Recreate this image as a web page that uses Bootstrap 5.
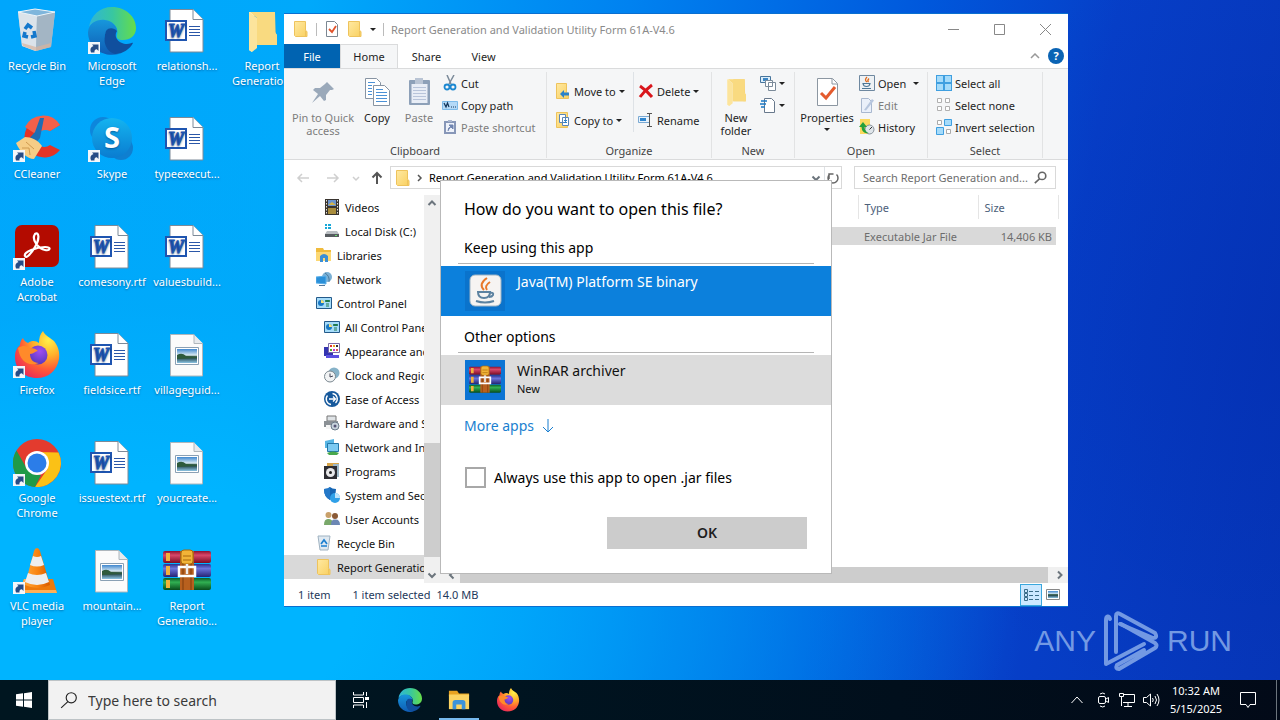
<!DOCTYPE html>
<html lang="en">
<head>
<meta charset="utf-8">
<meta name="viewport" content="width=device-width, initial-scale=1">
<title>Desktop</title>
<link href="https://cdn.jsdelivr.net/npm/bootstrap@5.3.0/dist/css/bootstrap.min.css" rel="stylesheet">
<style>
:root{--ui:"Noto Sans","Open Sans",sans-serif;--line:#dadbdc}
body{font-family:var(--ui);font-size:11px;line-height:13px;color:#1e1e1e}
svg{display:block;flex:none}
.btn{--bs-btn-font-size:11px;--bs-btn-line-height:13px;--bs-btn-padding-x:0;--bs-btn-padding-y:0;--bs-btn-border-width:0;--bs-btn-border-radius:0;--bs-btn-color:#1e1e1e}
.i48{width:48px;height:48px}.i32{width:32px;height:32px}.i16{width:16px;height:16px}
/* desktop */
.wall{background:
 radial-gradient(circle at 100% 50%,rgba(0,30,160,.25),transparent 30%),
 linear-gradient(100deg,#00a6fc 0%,#00a9fb 22%,#0082f0 45%,#0058dc 66%,#063fc8 80%,#0636b8 100%)}
.wall::before{content:"";position:absolute;inset:0;background:radial-gradient(ellipse 70% 75% at 10% 90%,#00b4ff 25%,rgba(0,170,250,.55) 60%,transparent 100%)}
.icons{position:relative;display:grid;grid-auto-flow:column;grid-template-rows:repeat(6,108px);grid-auto-columns:75px;justify-content:start}
.shortcut{color:#fff;line-height:15px;padding:7px 1px 0 0;text-decoration:none;text-shadow:0 1px 2px rgba(0,40,90,.5)}
.shortcut svg{margin-bottom:3px}
.brand{right:48px;bottom:8px;gap:8px;color:#86aaea;opacity:.85;font:30px/60px "Liberation Sans",sans-serif}
/* file window */
.win{left:284px;right:212px;top:13px;bottom:73px;background:#fff;border:1px solid #0a6fd0;border-width:1px 0 1px 0}
.titlebar{height:30px;color:#8a8a8a;padding-left:9px;gap:7px}
.rule-v{width:1px;background:#bbb;height:13px}
.capbtn{width:46px;height:30px}
.ribtabs{height:24px}
.ribtabs .btn{height:24px}
.tab-file{width:56px;background:#0063b1;--bs-btn-color:#fff}
.tab-home{width:58px;background:#f5f6f7;border:1px solid var(--line);border-bottom:0}
.tab-other{width:57px}
.ribbon{height:92px;background:#f5f6f7;border:1px solid var(--line);border-width:1px 0}
.grp{border-right:1px solid #e2e3e4;margin:3px 0 1px;height:86px}
.grp-name{color:#444;height:15px;line-height:15px;text-align:center}
.stack{gap:7px}
.off{color:#7d7d7d}
.big{padding-top:4px}
.big svg{margin-bottom:3px}
.tool{height:22px;gap:3px;white-space:nowrap}
.caret{width:0;height:0;border:3px solid transparent;border-top-color:#222;border-bottom:0}
.addr{height:35px;padding:6px 12px 6px 9px}
.box{border:1px solid #d9d9d9;height:23px}
.box input,.search input{border:0;outline:0;background:transparent;min-width:0}
.box input::placeholder{color:#6d6d6d;opacity:1}
.tree{width:140px}
.tree a{color:#111;text-decoration:none;height:24px;gap:5px;padding-left:32px;white-space:nowrap}
.tree .sub{padding-left:40px}
.tree .cur{background:#d9d9d9}
.vbar{width:16px;background:#f0f0f0}
.vthumb{height:114px;background:#cdcdcd;margin-bottom:10px}
.hbar{height:16px;background:#f0f0f0;padding-left:4px}
.files{table-layout:fixed;width:calc(100% - 8px)}
.files th{font-weight:400;color:#4c607a;height:28px;border-right:1px solid #e5e5e5;padding:0 6px}
.files td{height:22px;color:#6d6d6d;background:#d9d9d9;background-clip:padding-box;padding:0 6px}
.files td:last-child{text-align:right;padding-right:4px;border-right:4px solid #fff}
.status{height:23px;color:#1e395b;padding-left:14px;gap:6px}
.viewbtn{width:22px;height:22px}
.viewbtn.on{background:#cce8ff;box-shadow:inset 0 0 0 1px #3aa7dd}
/* open-with dialog */
.ask{left:440px;top:180px;width:392px;background:#fff;border:1px solid #b9b9b9;font-size:14px;line-height:20px;color:#000;padding-bottom:24px}
.ask h1{font-size:16px;line-height:24px;font-weight:400;margin:16px 23px 17px}
.ask h2{font-size:14px;line-height:20px;font-weight:400;margin:0 17px;padding:0 6px 5px;border-bottom:1px solid #b5b5b5}
.ask .btn{--bs-btn-font-size:14px;--bs-btn-line-height:20px}
.choice{height:50px;padding:5px 24px;gap:12px;width:100%;text-align:left}
.choice span{padding-top:1px}
.choice.pick{background:#0c80dc;--bs-btn-color:#fff}
.choice.alt{background:#dcdcdc;--bs-btn-color:#111}
.choice small{font-size:11px;line-height:15px;display:block}
.ask .form-check-input{width:21px;height:21px;margin:0;border:2px solid #a8a8a8;border-radius:0}
.ok{width:200px;height:32px;background:#ccc;font-weight:600}
.i40{width:40px;height:40px}
/* taskbar */
.bar{height:40px;background:linear-gradient(90deg,#001620,#001420 40%,#020a18);color:#fff}
.search{width:288px;background:#f2f2f2;border:1px solid #bdc3c6;padding-left:11px;gap:10px}
.search input{font-size:14px;font-family:var(--ui)}
.search input::placeholder{color:#3a3a3a;opacity:1}
.run{width:49px;height:40px}
.run.on{background:linear-gradient(#76b9ed,#76b9ed) center bottom/40px 2px no-repeat}
.clock{font-size:11px;line-height:18px;width:56px}
</style>
</head>
<body class="vh-100 d-flex flex-column overflow-hidden">
<svg width="0" height="0" class="position-absolute" aria-hidden="true">
<defs>
<linearGradient id="gEdgeA" x1="0" y1="0" x2="1" y2="0"><stop offset="0" stop-color="#2fb5d8"/><stop offset=".5" stop-color="#38c7a0"/><stop offset="1" stop-color="#67dd48"/></linearGradient>
<linearGradient id="gEdgeB" x1="0" y1="0" x2="0" y2="1"><stop offset="0" stop-color="#1797dc"/><stop offset="1" stop-color="#0f5cb4"/></linearGradient>
<linearGradient id="gFold" x1="0" y1="0" x2="1" y2="1"><stop offset="0" stop-color="#ffe9a2"/><stop offset="1" stop-color="#f9d060"/></linearGradient>
<radialGradient id="gFox" cx=".75" cy=".2" r=".95"><stop offset="0" stop-color="#fff04a"/><stop offset=".35" stop-color="#ffb02a"/><stop offset=".65" stop-color="#ff5b36"/><stop offset="1" stop-color="#e6225f"/></radialGradient>
<radialGradient id="gOrb" cx=".6" cy=".3" r=".8"><stop offset="0" stop-color="#a04df0"/><stop offset="1" stop-color="#4b36b8"/></radialGradient>
<linearGradient id="gSky" x1="0" y1="0" x2="0" y2="1"><stop offset="0" stop-color="#14b4f0"/><stop offset="1" stop-color="#0a7cd0"/></linearGradient>
<linearGradient id="gRed" x1="0" y1="0" x2="0" y2="1"><stop offset="0" stop-color="#8c1230"/><stop offset=".35" stop-color="#d8476a"/><stop offset="1" stop-color="#7a0c24"/></linearGradient>
<linearGradient id="gBlu" x1="0" y1="0" x2="0" y2="1"><stop offset="0" stop-color="#2b2f8c"/><stop offset=".35" stop-color="#6a74dc"/><stop offset="1" stop-color="#262474"/></linearGradient>
<linearGradient id="gGrn" x1="0" y1="0" x2="0" y2="1"><stop offset="0" stop-color="#0b5c28"/><stop offset=".35" stop-color="#31b052"/><stop offset="1" stop-color="#084d1d"/></linearGradient>
<linearGradient id="gPhoto" x1="0" y1="0" x2="0" y2="1"><stop offset="0" stop-color="#3f87cf"/><stop offset=".45" stop-color="#dcecf4"/><stop offset=".5" stop-color="#456b5a"/><stop offset=".65" stop-color="#2c5058"/><stop offset="1" stop-color="#8cc4e4"/></linearGradient>
<linearGradient id="gCone" x1="0" y1="0" x2="1" y2="0"><stop offset="0" stop-color="#ffa436"/><stop offset=".5" stop-color="#f98410"/><stop offset="1" stop-color="#d75a00"/></linearGradient>
<symbol id="arrow" viewBox="0 0 48 48"><path d="M0 35h12v12H0z" fill="#f4f6fa"/><path d="M3 45.500Q1 40.500 5.500 39L4 37.500h6.500V44L8.800 42.200Q6 42.500 6.500 45.500z" fill="#274c86"/></symbol>
<symbol id="bin" viewBox="0 0 48 48"><path d="M5 5 22 2l20 3-4 35-16 4-13-5z" fill="#b9c9d6" fill-opacity=".9"/><path d="M5 5 24 9l-1 35L9 39z" fill="#dbe3ea"/><path d="M24 9 42 5l-4 35-15 4z" fill="#a3b5c4"/><path d="m5 5 17-3 20 3-18 4z" fill="#7fb6dc" stroke="#eef5fa"/><path d="m9 36 14 4 15-4-1 4-14 4-13-5z" fill="#d8b49c" opacity=".7"/><g fill="none" stroke="#1478cc" stroke-width="3.500"><path d="m12 22 3-4 4 3M21 24l1 5-4 1M15 30l-4-1 1-4"/></g></symbol>
<symbol id="edge" viewBox="0 0 48 48"><path d="M1 20C3 8 12 0 24 0c14 0 24 10 24 21 0 8-6 12-13 12-5 0-7-2-6-5 2-6-2-13-11-14C10 13 3 16 1 20z" fill="url(#gEdgeA)"/><path d="M0 25C1 16 9 12 17 13c8 1 12 7 12 11-4-3-10-2-12 3-2 8 4 19 14 20C14 51 0 40 0 25z" fill="url(#gEdgeB)"/><path d="M18 24c3-4 8-3 11 0-4 6 2 13 10 13 3 0 5-2 6-1-3 6-10 11-18 11-9-2-13-13-9-23z" fill="#104f9e"/></symbol>
<symbol id="cc" viewBox="0 0 48 48"><path d="M47 10A20 20 0 1 0 47 35L37 30a9 9 0 1 1 0-14z" fill="#e33426"/><path d="M47 10A20 20 0 0 0 12 12l12 8q5-7 13-4z" fill="#f4604a"/><path d="M27 3h4l-4 20-6 7-6-5 7-8z" fill="#1f6db4"/><path d="m3 28 9-6c6 0 13 3 17 9l-8 13C14 44 7 37 3 28z" fill="#f6cd86"/><path d="m9 33 7 0 1 7M13 27l8 7" stroke="#cf9a50" fill="none"/></symbol>
<symbol id="skype" viewBox="0 0 48 48"><circle cx="15" cy="15" r="13" fill="#0d86dc"/><circle cx="33" cy="33" r="12" fill="#0f7fd0"/><circle cx="24" cy="23" r="20" fill="url(#gSky)"/><text x="24" y="33" text-anchor="middle" font-family="Open Sans" font-weight="700" font-size="29" fill="#fff">S</text></symbol>
<symbol id="word" viewBox="0 0 48 48"><path d="M7 2.500h23l10 10V45H7z" fill="#fff" stroke="#7d8a98"/><path d="M30 2.500v10h10" fill="#fff" stroke="#7d8a98"/><path d="M26 19.500h11M26 22.500h11M26 25.500h11M26 28.500h11" stroke="#2b57a8"/><path d="M2 13h22v21H2z" fill="#1f55b0"/><path d="M4 15h18v17H4z" fill="#fff"/><text x="13" y="30" text-anchor="middle" font-family="Liberation Serif" font-weight="700" font-style="italic" font-size="18" fill="#1f55b0" stroke="#1f55b0">W</text></symbol>
<symbol id="pic" viewBox="0 0 48 48"><path d="M7.500 3.500h23l9 9V45h-32z" fill="#fbfbfb" stroke="#aeb6bc"/><path d="M31 3.500v9h9" fill="#e6eaee" stroke="#aeb6bc"/><path d="M12.500 16.500h23v17h-23z" fill="#fff" stroke="#8aa0b4"/><path d="M14 18h20v14H14z" fill="url(#gPhoto)"/><path d="M14 24q5-3 9 1l11 1v1l-20 1z" fill="#2e5a3c"/></symbol>
<symbol id="folder" viewBox="0 0 48 48"><path d="M20 5h17l1 33H20z" fill="#f5cf72"/><path d="M37 26l2 2v10h-4V26z" fill="#fbdc88"/><path d="M11 5h9l-6 6v34l-3-2z" fill="#fff3cc"/><path d="M11 5l8 6v30l-5 4-3-2z" fill="#fce49c"/><path d="M12 5h25v20l2 3v10H19V11z" fill="#f9da80"/></symbol>
<symbol id="acro" viewBox="0 0 48 48"><rect x="2" y="2" width="44" height="42" rx="7" fill="#b30b00"/><path d="M22 11c4-3 5 5 0 13-4 7-9 12-10 9-2-4 12-9 20-9 7 0 5 4 0 3-6-1-14-10-10-16z" fill="none" stroke="#fff" stroke-width="2.200"/></symbol>
<symbol id="fox" viewBox="0 0 48 48"><path d="M30 0c2 5 8 7 11 10 4 5 6 11 5 18C44 40 35 47 24 47 11 47 2 38 2 26c0-6 2-9 5-12 0-3 1-5 3-7 1 3 3 4 5 5 4-3 8-2 11 0 0-5 1-9 4-12z" fill="url(#gFox)"/><circle cx="25" cy="24" r="9.500" fill="url(#gOrb)"/><path d="M5 17c5-3 9-2 12 0 4 0 6 1 8 3-3 0-4 3-8 3 0 5 3 9 9 9-10 4-19-1-21-15z" fill="#ff8a2a"/></symbol>
<symbol id="chrome" viewBox="0 0 48 48"><circle cx="24" cy="24" r="24" fill="#e33b2e"/><path d="M45.500 13.500A24 24 0 0 1 22 48L34.500 30 24 13z" fill="#fbc116"/><path d="M3.500 11.500 14 30l9 6 5 0-6 12A24 24 0 0 1 3.500 11.500z" fill="#1f9a48"/><circle cx="24" cy="24" r="12" fill="#fff"/><circle cx="24" cy="24" r="9.500" fill="#2b7de9"/></symbol>
<symbol id="vlc" viewBox="0 0 48 48"><path d="M11 32h29l4 14H6z" fill="#ee7a0c"/><path d="m11 32-5 14h38l-1-3H10l4-11z" fill="#ffb057"/><path d="M24 1q2 0 3 3l10 34q-12 6-25 0L21 4q1-3 3-3z" fill="url(#gCone)"/><path d="m20 9-3 9q7 3 14 0L28 9q-4 2-8 0zM15 26l-3 9q12 6 24 0l-3-9q-9 4-18 0z" fill="#eee"/></symbol>
<symbol id="rar" viewBox="0 0 48 48"><rect y="4" width="48" height="12" rx="2" fill="url(#gRed)"/><rect y="17" width="48" height="13" rx="2" fill="url(#gBlu)"/><rect y="31" width="48" height="12" rx="2" fill="url(#gGrn)"/><path d="M3 6h4v8H3zM3 19h4v9H3zM3 33h4v8H3z" fill="#f2b23c"/><path d="M17 4h14v39H17z" fill="#b8601e"/><path d="M20 4v39M28 4v39" stroke="#7e3c0c"/><rect x="18" y="3" width="12" height="14" rx="3" fill="#f2b437" stroke="#a8690e"/><path d="M20 9h8M20 13h8" stroke="#a8690e"/><path d="M16 20h16v9H16z" fill="none" stroke="#fff" stroke-width="2.500"/><path d="M24 17v10" stroke="#eee" stroke-width="2.500"/></symbol>
<symbol id="sfold" viewBox="0 0 16 16"><path d="M1.500.5h11v9l1.500 1v5H2.500l-1-1z" fill="url(#gFold)" stroke="#eec35c"/><path d="M12.500 10v5" stroke="#eec35c"/></symbol>
<symbol id="check" viewBox="0 0 16 16"><path d="M2.500.5h8l3 3v12h-11z" fill="#fff" stroke="#7b8792"/><path d="m5 8 3 3 4-6" stroke="#e2532b" stroke-width="1.800" fill="none"/></symbol>
<symbol id="pin" viewBox="0 0 32 32"><path d="m20 6 7 7-2 1-2 0-4 5 0 5-2 1-4-5-8 7 6-9-5-4 2-2 5 0 5-4z" fill="#9aa9ba"/></symbol>
<symbol id="copy" viewBox="0 0 32 32"><g fill="#fff" stroke="#8794a3"><path d="M4.500 2.500h11l4 4v16h-15z"/><path d="M12.500 9.500h11l5 5v15h-16z"/></g><path d="M7 6.500h7M7 9.500h4M7 12.500h4M7 15.500h4M7 18.500h4M15 13.500h7M15 16.500h11M15 19.500h11M15 22.500h11M15 25.500h11" stroke="#4b91d6"/></symbol>
<symbol id="paste" viewBox="0 0 32 32"><rect x="6" y="4" width="21" height="25" rx="1" fill="#8da0b8"/><path d="M8.500 8h16v19h-16z" fill="#e8edf6"/><path d="M12 2h8v6h-8z" fill="#b9c4d4"/><path d="M10 11.500h13M10 14.500h13M10 17.500h13M10 20.500h13M10 23.500h13" stroke="#b8c4da"/></symbol>
<symbol id="cut" viewBox="0 0 16 16"><path d="m5 0 4 9M12 0 7 9" stroke="#7b8a99" stroke-width="1.500"/><g fill="none" stroke="#1b87d0" stroke-width="1.800"><circle cx="5" cy="12" r="2.500"/><circle cx="11" cy="12" r="2.500"/></g></symbol>
<symbol id="cpath" viewBox="0 0 16 16"><path d="M.5 4.500h15v8H.5z" fill="#b4d9f7" stroke="#7dbbea"/><path d="m2 6 2 4 1.500-4 1.500 4M9 10h1M11 10h1M13 10h1" stroke="#14365a" stroke-width="1.200" fill="none"/></symbol>
<symbol id="pshort" viewBox="0 0 16 16"><path d="M2 2h12v13H2z" fill="#8797b8"/><path d="M4 4h8v9H4z" fill="#eef2fa"/><path d="M6 1h4v2H6z" fill="#aab6ce"/><path d="M6 12q0-4 3-4M7 6h4v4z" stroke="#6f84b0" fill="#6f84b0"/></symbol>
<symbol id="mv" viewBox="0 0 16 16"><path d="M1.500.5h10v9l2 1v5h-12z" fill="url(#gFold)" stroke="#eec35c"/><path d="m5 11 4-4v2.500h5v3H9V15z" fill="#2b82c9"/></symbol>
<symbol id="cp" viewBox="0 0 16 16"><path d="M1.500.5h11v15h-11z" fill="url(#gFold)" stroke="#eec35c"/><path d="M4.500 2.500h6v8h-6zM7.500 5.500h6v8h-6z" fill="#fff" stroke="#5b86b8"/><path d="M9 8.500h3M9 10.500h3" stroke="#2b82c9"/></symbol>
<symbol id="del" viewBox="0 0 16 16"><path d="M2 3q6 4 12 11M14 2Q7 7 2 14" stroke="#d9161c" stroke-width="3" fill="none"/></symbol>
<symbol id="ren" viewBox="0 0 16 16"><path d="M.5 4.500h11v6H.5z" fill="#e9f3fc" stroke="#7aa9d3"/><path d="M2 6h6v3H2z" fill="#2f86cf"/><path d="M9 1.500h5M11.500 1v13M9 14.500h5" stroke="#555" fill="none"/></symbol>
<symbol id="nitem" viewBox="0 0 16 16"><path d="M.5 1.500h10v6H.5z" fill="#dceefb" stroke="#47759c"/><path d="M3 3h5v3H3z" fill="#3c86c4"/><path d="M5.500 5.500h7v6h-7zM8.500 7.500h7v8h-7z" fill="#fff" stroke="#7b8a99"/></symbol>
<symbol id="easy" viewBox="0 0 16 16"><path d="M4.500 1.500h7l3 3v11h-10z" fill="#fff" stroke="#68798c"/><path d="M1 4h6M0 7h6M1 10h4" stroke="#1b78c4" stroke-width="1.400"/></symbol>
<symbol id="prop" viewBox="0 0 32 32"><path d="M6.500 2.500h15l5 5v22h-20z" fill="#fff" stroke="#8c97a2"/><path d="M21 3v5h5" fill="none" stroke="#8c97a2"/><path d="m10 17 5 5 9-11" stroke="#e45b2e" stroke-width="3" fill="none"/></symbol>
<symbol id="java" viewBox="0 0 16 16"><path d="M.5.5h15v15H.5z" fill="#eef2f5" stroke="#6e88a0"/><path d="M8 2q-3 3 0 5M10 3.500q-2 2-.5 3.500" stroke="#e06a1c" fill="none" stroke-width="1.300"/><path d="M4 8.500h7q-.5 3-3.500 3T4 8.500zM3 13.500h9" stroke="#4d7796" fill="none" stroke-width="1.200"/></symbol>
<symbol id="edit" viewBox="0 0 16 16"><path d="M2.500 1.500h7l3 3v11h-10z" fill="#eaf0fa" stroke="#a9b8cf"/><path d="m5 13 8-11 2 1.500-8 10z" fill="#b7c6de"/></symbol>
<symbol id="hist" viewBox="0 0 16 16"><path d="M1 0h10v15H1z" fill="#fbd95f"/><circle cx="10.500" cy="10.500" r="4.500" fill="#dfe5ea" stroke="#88929b"/><path d="M10.500 10.500 13 8" stroke="#333"/><path d="m0 8 4-5 4 5H5.500q0 4 4 6Q3 15 2.500 8z" fill="#25a03c"/></symbol>
<symbol id="sall" viewBox="0 0 16 16"><path d="M0 0h16v16H0z" fill="#3f9fe0"/><path d="M1 1h6v6H1zM9 1h6v6H9zM1 9h6v6H1zM9 9h6v6H9z" fill="#a5dbfa"/></symbol>
<symbol id="snone" viewBox="0 0 16 16"><path d="M1.500 1.500h4v4h-4zM9.500 1.500h4v4h-4zM1.500 9.500h4v4h-4zM9.500 9.500h4v4h-4z" fill="#fff" stroke="#b0b0b0"/></symbol>
<symbol id="sinv" viewBox="0 0 16 16"><path d="M1.500 1.500h4v4h-4zM10.500 10.500h4v4h-4z" fill="#fff" stroke="#aaa"/><path d="M8.500.5h7v6h-7zM.5 8.500h7v7h-7z" fill="#a5dbfa" stroke="#3f9fe0"/></symbol>
<symbol id="video" viewBox="0 0 16 16"><path d="M1 0h14v16H1z" fill="#39342f"/><path d="M4 1h8v6H4z" fill="#6c94cc"/><path d="M4 9h8v6H4z" fill="#a98c3c"/><path d="m4 6 4-3 4 3z" fill="#d4b44a"/><path d="M2.500 1v15M13.500 1v15" stroke="#e8e4da" stroke-dasharray="1.500 1.500"/></symbol>
<symbol id="disk" viewBox="0 0 16 16"><path d="M1 1h2v2H1zM4 1h3v2H4zM1 4h2v2H1zM4 4h3v2H4z" fill="#18a8d8"/><path d="m3 8 10 0 2 3H1z" fill="#b9bec2"/><path d="M1 11h14v3H1z" fill="#575c60"/><path d="M11 12.500h2" stroke="#67e06a"/></symbol>
<symbol id="libs" viewBox="0 0 16 16"><path d="M0 1h7l1 2h7v11H0z" fill="#f0bb3c"/><path d="M0 5h15v9H0z" fill="#fcd874"/><path d="M4 9q4-4 8 0v6h-3v-4H7v4H4z" fill="#3a8fd6"/></symbol>
<symbol id="net" viewBox="0 0 16 16"><circle cx="11" cy="6" r="5" fill="#7cb0d4"/><path d="M9 2q5 3 4 9" stroke="#47799d" fill="none"/><path d="m0 6 10-1v8L0 12z" fill="#2a8fd8" stroke="#5ab0ea"/><path d="M3 14.500h6" stroke="#55789a"/></symbol>
<symbol id="cpl" viewBox="0 0 16 16"><path d="M.5 2.500h15v11H.5z" fill="#a6dcfa" stroke="#245a8a"/><circle cx="5" cy="8" r="3" fill="#1878c4"/><path d="M5 8V5a3 3 0 0 1 3 3z" fill="#f6e27c"/><path d="M9.500 5.500h4v1h-4zM10 9h3M10 11h3" stroke="#1f7a4e"/></symbol>
<symbol id="app" viewBox="0 0 16 16"><path d="M0 4h9v9H0z" fill="#3434b0"/><path d="M4.500.5h11v9h-11z" fill="#fff" stroke="#7c6ca8"/><path d="M6 2h2v2H6z" fill="#d33"/><path d="M9 2h2v2H9z" fill="#f0a020"/><path d="M12 2h2v2h-2z" fill="#333"/><path d="M6 6h2v2H6z" fill="#5a2"/><path d="M9 6h2v2H9z" fill="#c3c"/><path d="M12 6h2v2h-2z" fill="#d55"/><path d="M2 12h13v3H2z" fill="#5a50e0"/></symbol>
<symbol id="clk" viewBox="0 0 16 16"><circle cx="10" cy="6" r="5.500" fill="#86b2c8"/><circle cx="6" cy="9.500" r="5.500" fill="#f1f3f4" stroke="#7b8890"/><path d="M6 10V6.500M6 10l3-1" stroke="#445"/></symbol>
<symbol id="ease" viewBox="0 0 16 16"><circle cx="8" cy="8" r="8" fill="#17599c"/><path d="M8.500 2.500a5.500 5.500 0 0 1 3 9.500M3.500 4.500A5.500 5.500 0 0 0 7 13.500M5 8h6M9 5.500 11.500 8 9 10.500" stroke="#fff" fill="none" stroke-width="1.300"/></symbol>
<symbol id="hw" viewBox="0 0 16 16"><path d="M3 1h9v5H3z" fill="#dfe3e6" stroke="#777"/><path d="M0 6h14v6H0z" fill="#8b9095"/><path d="M2 10h6v4H2z" fill="#f5f5f5"/><circle cx="11" cy="11" r="4" fill="#c7d3dc" stroke="#6b7b89"/><circle cx="11" cy="11" r="1.500" fill="#557"/></symbol>
<symbol id="neti" viewBox="0 0 16 16"><path d="M1 2l9-2v9H1z" fill="#58b6e4"/><path d="M3.500 4.500h11v8h-11z" fill="#7ccaf2" stroke="#2477a8"/><path d="M3 14q6-3 12 0l-2 2H5z" fill="#49a84c"/></symbol>
<symbol id="prog" viewBox="0 0 16 16"><path d="M3 0h12v14H3z" fill="#d9a64a"/><path d="M9 1h6v13H9z" fill="#9fb9c8"/><path d="M0 3h13v13H0z" fill="#2d2d33"/><circle cx="6.500" cy="9.500" r="4.500" fill="#e8e8ea"/><circle cx="6.500" cy="9.500" r="1.500" fill="#222"/></symbol>
<symbol id="shield" viewBox="0 0 16 16"><path d="M0 2q4 0 6-2 2 2 6 2 0 8-6 11Q0 10 0 2z" fill="#1565b4"/><path d="M6 0v13Q0 10 0 2q4 0 6-2z" fill="#2478c8"/><circle cx="11" cy="11" r="5" fill="#2fa0e8"/><path d="M11 11V6a5 5 0 0 1 5 5z" fill="#bfe4fa"/></symbol>
<symbol id="users" viewBox="0 0 16 16"><circle cx="4.500" cy="4" r="3" fill="#c9a06a"/><path d="M0 14q0-7 5-6 4 0 4 6z" fill="#79a86a"/><circle cx="11" cy="5" r="3" fill="#8a5a36"/><path d="M7 14q0-6 4-5.500 5-.5 5 5.500z" fill="#6c87b4"/></symbol>
<symbol id="sbin" viewBox="0 0 16 16"><path d="M2 1h12l-2 14H4z" fill="#dfe9f1" stroke="#9fb2c1"/><path d="m5 9 3-4 3 4M5 11h6" stroke="#1c7fd0" stroke-width="1.700" fill="none"/></symbol>
<symbol id="exp" viewBox="0 0 24 24"><path d="M1 2h9l2 3h11v3H1z" fill="#e8a321"/><path d="M1 6h22v16H1z" fill="#fcd462"/><path d="M5 22v-7q0-3 3-3h8q3 0 3 3v7h-4v-5H9v5z" fill="#3b93da"/></symbol>
<symbol id="up" viewBox="0 0 16 16"><path d="m4.500 10 3.500-3.500L11.500 10" fill="none" stroke="currentColor" stroke-width="2"/></symbol>
<symbol id="down" viewBox="0 0 16 16"><path d="M4.500 6.500 8 10l3.500-3.500" fill="none" stroke="currentColor" stroke-width="2"/></symbol>
<symbol id="glass" viewBox="0 0 16 16"><circle cx="10" cy="6" r="4.500" fill="none" stroke="currentColor"/><path d="M7 9.500 1 15" stroke="currentColor"/></symbol>
</defs></svg>

<main class="wall position-relative flex-grow-1">
 <nav class="icons" id="icons" aria-label="Desktop icons"></nav>
 <div class="brand position-absolute d-flex align-items-center"><span>ANY</span>
  <svg width="55" height="62" viewBox="0 0 55 62" fill="none" stroke="#86aaea" stroke-width="4" stroke-linejoin="round" stroke-linecap="round"><path d="M6 9C5 5 2 6 2 10V54L40 34"/><path d="M12 42V6q0-4 4-2l35 19q3 5-2 5L16 14"/><path d="m17 14 34 19q3 3 0 5L15 59q-4 0-2-4l27-15"/></svg>
  <span>RUN</span></div>

 <section class="win position-absolute d-flex flex-column" aria-label="File Explorer">
  <header class="titlebar d-flex align-items-center flex-shrink-0">
   <svg class="i16"><use href="#sfold"/></svg><span class="rule-v"></span>
   <svg class="i16"><use href="#check"/></svg><svg class="i16"><use href="#sfold"/></svg>
   <span class="caret"></span><span class="rule-v"></span>
   <span class="text-nowrap">Report Generation and Validation Utility Form 61A-V4.6</span>
   <div class="ms-auto d-flex">
    <button class="btn capbtn" aria-label="Minimize"><svg class="m-auto" width="11" height="11"><path d="M0 5.500h11" stroke="#888"/></svg></button>
    <button class="btn capbtn" aria-label="Maximize"><svg class="m-auto" width="11" height="11"><path d="M.5.5h10v10H.5z" fill="none" stroke="#888"/></svg></button>
    <button class="btn capbtn" aria-label="Close"><svg class="m-auto" width="11" height="11"><path d="m0 0 11 11M11 0 0 11" stroke="#888"/></svg></button>
   </div>
  </header>
  <div class="ribtabs d-flex align-items-center flex-shrink-0">
   <button class="btn tab-file">File</button><button class="btn tab-home">Home</button><button class="btn tab-other">Share</button><button class="btn tab-other">View</button>
   <svg class="ms-auto me-2" width="10" height="6"><path d="m1 5 4-4 4 4" fill="none" stroke="#999" stroke-width="1.500"/></svg>
   <svg class="me-1" width="16" height="16"><circle cx="8" cy="8" r="8" fill="#0a63b4"/><text x="8" y="12" text-anchor="middle" font-size="11" font-weight="700" fill="#fff">?</text></svg>
  </div>
  <div class="ribbon d-flex flex-shrink-0">
   <div class="grp d-flex flex-column" style="width:263px">
    <div class="d-flex flex-grow-1">
     <button class="btn big off ms-1 d-flex flex-column align-items-center" style="width:70px"><svg class="i32"><use href="#pin"/></svg>Pin to Quick access</button>
     <button class="btn big d-flex flex-column align-items-center" style="width:38px"><svg class="i32"><use href="#copy"/></svg>Copy</button>
     <button class="btn big off d-flex flex-column align-items-center" style="width:46px"><svg class="i32"><use href="#paste"/></svg>Paste</button>
     <div>
      <button class="btn tool d-flex align-items-center"><svg class="i16"><use href="#cut"/></svg>Cut</button>
      <button class="btn tool d-flex align-items-center"><svg class="i16"><use href="#cpath"/></svg>Copy path</button>
      <button class="btn tool off d-flex align-items-center"><svg class="i16"><use href="#pshort"/></svg>Paste shortcut</button>
     </div>
    </div>
    <div class="grp-name">Clipboard</div>
   </div>
   <div class="grp d-flex flex-column" style="width:165px">
    <div class="d-flex flex-grow-1">
     <div class="d-flex flex-column ps-2 pt-2 stack border-end" style="width:87px;height:60px">
      <button class="btn tool d-flex align-items-center"><svg class="i16"><use href="#mv"/></svg>Move to<span class="caret"></span></button>
      <button class="btn tool d-flex align-items-center"><svg class="i16"><use href="#cp"/></svg>Copy to<span class="caret"></span></button>
     </div>
     <div class="d-flex flex-column ps-1 pt-2 stack">
      <button class="btn tool d-flex align-items-center"><svg class="i16"><use href="#del"/></svg>Delete<span class="caret"></span></button>
      <button class="btn tool d-flex align-items-center"><svg class="i16"><use href="#ren"/></svg>Rename</button>
     </div>
    </div>
    <div class="grp-name">Organize</div>
   </div>
   <div class="grp d-flex flex-column" style="width:83px">
    <div class="d-flex flex-grow-1">
     <button class="btn big d-flex flex-column align-items-center ms-1" style="width:40px"><svg class="i32"><use href="#folder"/></svg>New folder</button>
     <div class="ms-1">
      <button class="btn tool d-flex align-items-center" aria-label="New item"><svg class="i16"><use href="#nitem"/></svg><span class="caret"></span></button>
      <button class="btn tool d-flex align-items-center" aria-label="Easy access"><svg class="i16"><use href="#easy"/></svg><span class="caret"></span></button>
     </div>
    </div>
    <div class="grp-name">New</div>
   </div>
   <div class="grp d-flex flex-column" style="width:133px">
    <div class="d-flex flex-grow-1">
     <button class="btn big d-flex flex-column align-items-center ms-1" style="width:56px"><svg class="i32"><use href="#prop"/></svg>Properties<span class="caret mt-1"></span></button>
     <div class="ms-1">
      <button class="btn tool d-flex align-items-center"><svg class="i16"><use href="#java"/></svg>Open<span class="caret ms-1"></span></button>
      <button class="btn tool off d-flex align-items-center"><svg class="i16"><use href="#edit"/></svg>Edit</button>
      <button class="btn tool d-flex align-items-center"><svg class="i16"><use href="#hist"/></svg>History</button>
     </div>
    </div>
    <div class="grp-name">Open</div>
   </div>
   <div class="grp d-flex flex-column" style="width:115px">
    <div class="flex-grow-1 ps-2">
     <button class="btn tool d-flex align-items-center"><svg class="i16"><use href="#sall"/></svg>Select all</button>
     <button class="btn tool d-flex align-items-center"><svg class="i16"><use href="#snone"/></svg>Select none</button>
     <button class="btn tool d-flex align-items-center"><svg class="i16"><use href="#sinv"/></svg>Invert selection</button>
    </div>
    <div class="grp-name">Select</div>
   </div>
  </div>
  <div class="addr d-flex align-items-center flex-shrink-0">
   <svg width="97" height="22" viewBox="0 0 97 22" fill="none" stroke="#cfcfcf" stroke-width="1.500"><path d="M16 11H5m4-4-4 4 4 4M34 11h11m-4-4 4 4-4 4"/><path d="m60 10 3 3 3-3"/><path d="M84 17V6m-4.500 4.500L84 6l4.500 4.500" stroke="#555" stroke-width="2"/></svg>
   <div class="box d-flex align-items-center flex-grow-1">
    <svg class="i16 ms-1"><use href="#sfold"/></svg>
    <svg class="ms-1" width="10" height="10"><path d="m3 2 3 3-3 3" fill="none" stroke="#555" stroke-width="1.500"/></svg>
    <span class="ms-1 text-nowrap text-black">Report Generation and Validation Utility Form 61A-V4.6</span>
    <svg class="i16 ms-auto text-secondary"><use href="#down"/></svg>
    <span class="border-start h-100"></span>
    <svg class="i16" viewBox="0 0 16 16"><path d="M11.500 4.500a5 5 0 1 1-7 0M4 9V4h4.500" fill="none" stroke="#666" stroke-width="1.500"/></svg>
   </div>
   <label class="box d-flex align-items-center px-2" style="width:202px;margin-left:12px"><input class="w-100 p-0" aria-label="Search folder" placeholder="Search Report Generation and..."><svg width="13" height="13" viewBox="0 0 16 16" stroke-width="2" color="#666"><use href="#glass"/></svg></label>
  </div>
  <div class="d-flex flex-grow-1 overflow-hidden">
   <ul class="tree list-unstyled m-0 overflow-hidden flex-shrink-0" id="tree"></ul>
   <div class="vbar d-flex flex-column flex-shrink-0 text-secondary"><svg class="i16"><use href="#up"/></svg><div class="vthumb mt-auto"></div><svg class="i16"><use href="#down"/></svg></div>
   <div class="flex-grow-1 d-flex flex-column">
    <table class="files">
     <colgroup><col><col style="width:120px"><col style="width:80px"></colgroup>
     <thead><tr><th></th><th>Type</th><th>Size</th></tr></thead>
     <tbody><tr style="border-top:8px solid #fff"><td></td><td>Executable Jar File</td><td>14,406 KB</td></tr></tbody>
    </table>
    <div class="hbar mt-auto d-flex align-items-center text-secondary"><svg class="i16" style="rotate:90deg"><use href="#down"/></svg><div class="flex-grow-1 h-100" style="background:#cdcdcd"></div><svg class="i16 ms-1" style="rotate:90deg"><use href="#up"/></svg></div>
   </div>
  </div>
  <footer class="status d-flex align-items-center flex-shrink-0"><span class="me-3">1 item</span><span>1 item selected</span><span>14.0 MB</span>
   <div class="ms-auto d-flex gap-1 me-2">
   <button class="btn viewbtn on" aria-label="Details"><svg class="m-auto" width="16" height="14" fill="none" stroke="#3b6c88"><path d="M1.500 1.500h3v3h-3zM1.500 5.500h3v3h-3zM1.500 9.500h3v3h-3zM6 3.500h4m2 0h4M6 7.500h4m2 0h4M6 11.500h4m2 0h4"/></svg></button>
   <button class="btn" aria-label="Large icons"><svg width="14" height="11" viewBox="0 0 14 11"><path d="M.5.500h13v10H.5z" fill="#fff" stroke="#888"/><path d="M2 2h10v7H2z" fill="url(#gPhoto)"/></svg></button>
   </div>
  </footer>
 </section>

 <section class="ask position-absolute" role="dialog" aria-label="Open with">
  <h1>How do you want to open this file?</h1>
  <h2>Keep using this app</h2>
  <button class="btn choice pick d-flex" style="margin-top:2px">
   <svg class="i40" viewBox="0 0 40 40"><path d="M0 0h40v40H0z" fill="#0a73cc"/><rect x="5" y="4" width="31" height="31" rx="5" fill="#f6f4f2" stroke="#9db4c4"/><path d="M22 7q-9 6-3 12M25 11q-6 4-3 8" stroke="#e8782a" stroke-width="2" fill="none"/><path d="M13 21h12q0 6-6 6t-6-6zM25 22q4-1 3 2-1 2-4 2M11 30q9 3 18 0" stroke="#5c82a0" stroke-width="2" fill="none"/></svg>
   <span>Java(TM) Platform SE binary</span></button>
  <h2 style="margin-top:11px">Other options</h2>
  <button class="btn choice alt d-flex" style="margin-top:2px">
   <svg class="i40" viewBox="0 0 40 40"><path d="M0 0h40v40H0z" fill="#0c74d4"/><use href="#rar" x="4" y="4" width="32" height="32"/></svg>
   <span>WinRAR archiver<small>New</small></span></button>
  <a href="#" class="d-flex align-items-center gap-2 text-decoration-none" style="color:#1a7fd0;margin:11px 23px 31px">More apps<svg width="12" height="14" fill="none" stroke="#1a7fd0"><path d="M6 0v13M1 8l5 5 5-5"/></svg></a>
  <div class="d-flex align-items-center gap-2 px-4"><input class="form-check-input" type="checkbox" id="always"><label for="always">Always use this app to open .jar files</label></div>
  <div class="d-flex justify-content-end px-4" style="margin-top:29px"><button class="btn ok">OK</button></div>
 </section>
</main>

<footer class="bar d-flex flex-shrink-0">
 <button class="btn d-flex align-items-center justify-content-center" style="width:48px" aria-label="Start"><svg width="16" height="16" fill="#fff"><path d="M0 2.300 7 1.300V7.500H0zM8 1.200 16 0v7.500H8zM0 8.500h7v6.200l-7-1zM8 8.500h8V16l-8-1.200z"/></svg></button>
 <label class="search d-flex align-items-center"><svg width="18" height="18" viewBox="0 0 16 16" color="#222"><use href="#glass"/></svg><input class="flex-grow-1 p-0" aria-label="Search" placeholder="Type here to search"></label>
 <button class="btn run d-flex align-items-center justify-content-center" aria-label="Task view"><svg width="16" height="16" fill="none" stroke="#fff"><path d="M.5 0v3h10V0M.5 5.500h10v5H.500zM.5 16v-3h10v3M13.500 0v4M13.500 10v6"/><path d="M12 5h4v3h-4z" fill="#fff" stroke="none"/></svg></button>
 <button class="btn run d-flex align-items-center justify-content-center" aria-label="Edge"><svg width="24" height="24"><use href="#edge"/></svg></button>
 <button class="btn run on d-flex align-items-center justify-content-center" aria-label="File Explorer"><svg width="22" height="22"><use href="#exp"/></svg></button>
 <button class="btn run d-flex align-items-center justify-content-center" aria-label="Firefox"><svg width="24" height="24"><use href="#fox"/></svg></button>
 <div class="ms-auto d-flex align-items-center gap-2">
  <svg width="12" height="8" fill="none" stroke="#fff"><path d="m.5 7 5.500-6L11.500 7"/></svg>
  <svg class="ms-1" width="16" height="16" fill="none" stroke="#fff"><rect x="3.500" y="4.500" width="7" height="7" rx="1.500"/><path d="m11 7 2.500-1.500v5L11 9M5 2q3-2 5 0M5 14q3 2 5 0"/></svg>
  <svg width="16" height="16" fill="none" stroke="#fff"><path d="M4 2.500h11.500v8H4M9 11v3M5 14.500h8M.5 1.500h4v3h-4zM2.500 5v9"/></svg>
  <svg width="17" height="16" fill="none" stroke="#fff"><path d="M.5 5.500h3l4-3.500v12l-4-3.500h-3zM9.500 6q1.500 2 0 4M12 4q3 4 0 8M14 2q4 6 0 12"/></svg>
  <div class="clock text-center text-nowrap">10:32 AM<br>5/15/2025</div>
  <svg class="ms-2 me-1" width="16" height="16" fill="none" stroke="#fff"><path d="M.5.500h15v12H10l-2 3-2-3H.500z"/></svg>
  <span class="border-start border-secondary ms-2" style="width:4px;height:40px"></span>
 </div>
</footer>

<script src="https://cdn.jsdelivr.net/npm/bootstrap@5.3.0/dist/js/bootstrap.bundle.min.js"></script>
<script>
const icons = [
 ['bin','Recycle Bin'],['cc','CCleaner',1],['acro','Adobe Acrobat',1],['fox','Firefox',1],['chrome','Google Chrome',1],['vlc','VLC media player',1],
 ['edge','Microsoft Edge',1],['skype','Skype',1],['word','comesony.rtf'],['word','fieldsice.rtf'],['word','issuestext.rtf'],['pic','mountain...'],
 ['word','relationsh...'],['word','typeexecut...'],['word','valuesbuild...'],['pic','villageguid...'],['pic','youcreate...'],['rar','Report Generatio...'],
 ['folder','Report Generatio...']];
document.getElementById('icons').innerHTML = icons.map(([i,t,s]) =>
 `<a href="#" class="shortcut d-flex flex-column align-items-center text-center"><svg class="i48"><use href="#${i}"/>${s?'<use href="#arrow"/>':''}</svg><span>${t}</span></a>`).join('');
const tree = [['video','Videos',1],['disk','Local Disk (C:)',1],['libs','Libraries'],['net','Network'],['cpl','Control Panel'],
 ['cpl','All Control Panel Items',1],['app','Appearance and Personalization',1],['clk','Clock and Region',1],['ease','Ease of Access',1],
 ['hw','Hardware and Sound',1],['neti','Network and Internet',1],['prog','Programs',1],['shield','System and Security',1],
 ['users','User Accounts',1],['sbin','Recycle Bin'],['sfold','Report Generation']];
document.getElementById('tree').innerHTML = tree.map(([i,t,s],n) =>
 `<li><a href="#" class="d-flex align-items-center ${s?'sub':''} ${n==tree.length-1?'cur':''}"><svg class="i16"><use href="#${i}"/></svg>${t}</a></li>`).join('');
</script>
</body>
</html>
